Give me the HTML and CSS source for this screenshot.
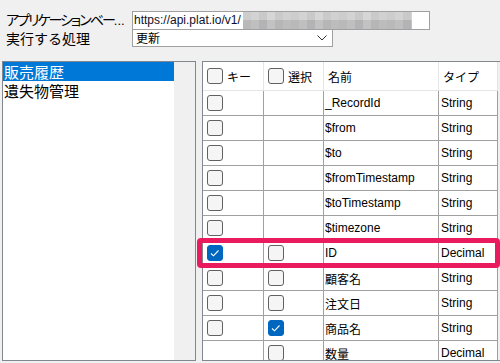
FILE: index.html
```html
<!DOCTYPE html>
<html lang="ja">
<head>
<meta charset="utf-8">
<title>設定</title>
<link rel="stylesheet" href="styles.css">
</head>
<body>
<div class="form">
  <div class="field">
    <span class="label label-narrow">アプリケーションベー<span class="dots">...</span></span>
    <div class="textbox">
      <span class="url">https://api.plat.io/v1/</span>
      <span class="mosaic"><span class="mrow top"></span><span class="mrow bottom"></span></span>
    </div>
  </div>
  <div class="field field-second">
    <span class="label">実行する処理</span>
    <div class="select">
      <span class="select-text">更新</span>
      <svg class="chev" width="10" height="6" viewBox="0 0 10 6"><polyline points="0.5,0.5 5,5 9.5,0.5" fill="none" stroke="#333" stroke-width="1"/></svg>
    </div>
  </div>
</div>
<div class="main">
  <div class="listbox">
    <ul class="items">
      <li class="selected">販売履歴</li>
      <li>遺失物管理</li>
    </ul>
    <div class="vscroll"></div>
  </div>
  <div class="grid">
    <div class="row head">
      <div class="cell c1"><span class="cb"></span>キー</div>
      <div class="cell c2"><span class="cb"></span>選択</div>
      <div class="cell c3">名前</div>
      <div class="cell c4">タイプ</div>
    </div>
    <div class="row"><div class="cell c1"><span class="cb"></span></div><div class="cell c2"></div><div class="cell c3">_RecordId</div><div class="cell c4">String</div></div>
    <div class="row"><div class="cell c1"><span class="cb"></span></div><div class="cell c2"></div><div class="cell c3">$from</div><div class="cell c4">String</div></div>
    <div class="row"><div class="cell c1"><span class="cb"></span></div><div class="cell c2"></div><div class="cell c3">$to</div><div class="cell c4">String</div></div>
    <div class="row"><div class="cell c1"><span class="cb"></span></div><div class="cell c2"></div><div class="cell c3">$fromTimestamp</div><div class="cell c4">String</div></div>
    <div class="row"><div class="cell c1"><span class="cb"></span></div><div class="cell c2"></div><div class="cell c3">$toTimestamp</div><div class="cell c4">String</div></div>
    <div class="row"><div class="cell c1"><span class="cb"></span></div><div class="cell c2"></div><div class="cell c3">$timezone</div><div class="cell c4">String</div></div>
    <div class="row"><div class="cell c1"><span class="cb on"><svg width="14" height="14" viewBox="0 0 14 14"><polyline points="3,7.5 5.5,9.8 10.5,4.5" fill="none" stroke="#fff" stroke-width="1.1"/></svg></span></div><div class="cell c2"><span class="cb"></span></div><div class="cell c3">ID</div><div class="cell c4">Decimal</div></div>
    <div class="row"><div class="cell c1"><span class="cb"></span></div><div class="cell c2"><span class="cb"></span></div><div class="cell c3">顧客名</div><div class="cell c4">String</div></div>
    <div class="row"><div class="cell c1"><span class="cb"></span></div><div class="cell c2"><span class="cb"></span></div><div class="cell c3">注文日</div><div class="cell c4">String</div></div>
    <div class="row"><div class="cell c1"><span class="cb"></span></div><div class="cell c2"><span class="cb on"><svg width="14" height="14" viewBox="0 0 14 14"><polyline points="3,7.5 5.5,9.8 10.5,4.5" fill="none" stroke="#fff" stroke-width="1.1"/></svg></span></div><div class="cell c3">商品名</div><div class="cell c4">String</div></div>
    <div class="row"><div class="cell c1"></div><div class="cell c2"><span class="cb"></span></div><div class="cell c3">数量</div><div class="cell c4">Decimal</div></div>
  </div>
  <div class="highlight"></div>
</div>
</body>
</html>
```

FILE: styles.css
```css
* { box-sizing: border-box; }
html, body { margin: 0; padding: 0; }
body {
  width: 500px;
  height: 363px;
  overflow: hidden;
  background: #f0f0f0;
  font-family: "Liberation Sans", "Noto Sans CJK JP", sans-serif;
  color: #000;
}
.form {
  padding-top: 10px;
  display: flex;
  flex-direction: column;
}
.field {
  display: flex;
  align-items: center;
}
.field-second { margin-top: -1px; }
.label {
  width: 132px;
  flex: none;
  padding-left: 6px;
  font-family: "Noto Sans CJK JP", sans-serif;
  font-size: 14px;
  line-height: 18px;
  white-space: nowrap;
}
.label-narrow {
  font-feature-settings: "palt";
  letter-spacing: -2px;
}
.dots {
  font-family: "Liberation Sans", sans-serif;
  letter-spacing: 0;
  font-size: 13px;
}
.textbox {
  width: 298px;
  height: 19px;
  border: 1px solid #a0a0a0;
  background: #fff;
  display: flex;
  align-items: center;
  padding-left: 1px;
}
.url {
  font-size: 12px;
  line-height: 17px;
  color: #10102a;
  white-space: nowrap;
}
.mosaic {
  margin-left: 2px;
  width: 169px;
  height: 17px;
  display: flex;
  flex-direction: column;
}
.mrow { flex: 1; }
.mrow.top {
  background: repeating-linear-gradient(90deg, #cdcdcd 0 8px, #d3d3d3 8px 16px, #c8c9c9 16px 24px, #d6d6d6 24px 32px, #cacaca 32px 40px, #d1d1d0 40px 48px);
}
.mrow.bottom {
  background: repeating-linear-gradient(90deg, #b9b9b9 0 8px, #bfbfbf 8px 16px, #b3b3b5 16px 24px, #c2c2c2 24px 32px, #b7b6b6 32px 40px, #bcbcbc 40px 48px);
}
.select {
  width: 201px;
  height: 18px;
  border: 1px solid #a0a0a0;
  background: #fff;
  display: flex;
  align-items: center;
  justify-content: space-between;
  padding: 0 5px 0 3px;
}
.select-text {
  font-family: "Noto Sans CJK JP", sans-serif;
  font-size: 12px;
  line-height: 16px;
}
.chev { display: block; }
.main {
  position: relative;
  margin-top: 14px;
  height: 300px;
  display: flex;
  padding-left: 2px;
  gap: 6px;
}
.listbox {
  width: 194px;
  height: 300px;
  border: 1px solid #828790;
  background: #fff;
  display: flex;
  flex: none;
}
.items {
  list-style: none;
  margin: 0;
  padding: 0;
  width: 171px;
}
.items li {
  height: 19px;
  line-height: 19px;
  font-size: 15px;
  font-family: "Noto Sans CJK JP", sans-serif;
  padding-left: 1px;
  white-space: nowrap;
}
.items li.selected {
  background: #0078d7;
  color: #fff;
}
.vscroll {
  flex: 1;
  background: #f0f0f0;
}
.grid {
  width: 298px;
  height: 300px;
  border-left: 1px solid #828790;
  border-top: 1px solid #828790;
  border-bottom: 1px solid #828790;
  overflow: hidden;
  background: #f0f0f0;
  flex: none;
}
.row {
  display: flex;
  height: 25px;
}
.row.head { height: 29px; }
.cell {
  flex: none;
  height: 100%;
  border-right: 1px solid #a0a0a0;
  border-bottom: 1px solid #a0a0a0;
  background: #fff;
  display: flex;
  align-items: center;
  font-size: 12px;
  white-space: nowrap;
  overflow: hidden;
}
.c1 { width: 61px; padding-left: 4px; }
.c2 { width: 60px; padding-left: 4px; }
.c3 { width: 115px; padding-left: 1px; }
.c4 { width: 59px; padding-left: 2px; }
.head .cell {
  border-color: #e5e5e5;
  padding-left: 4px;
  font-family: "Noto Sans CJK JP", sans-serif;
}
.cb {
  width: 16px;
  height: 16px;
  flex: none;
  border: 1px solid #616161;
  border-radius: 3px;
  background: #f5f5f5;
  display: flex;
  align-items: center;
  justify-content: center;
}
.head .cb { margin-right: 4px; }
.cb.on {
  background: #0067c0;
  border-color: #0067c0;
}
.cb svg { display: block; }
.highlight {
  position: absolute;
  left: 197px;
  top: 177px;
  width: 303px;
  height: 30px;
  border: 5px solid #ea1a5e;
  border-radius: 4px;
}
```
